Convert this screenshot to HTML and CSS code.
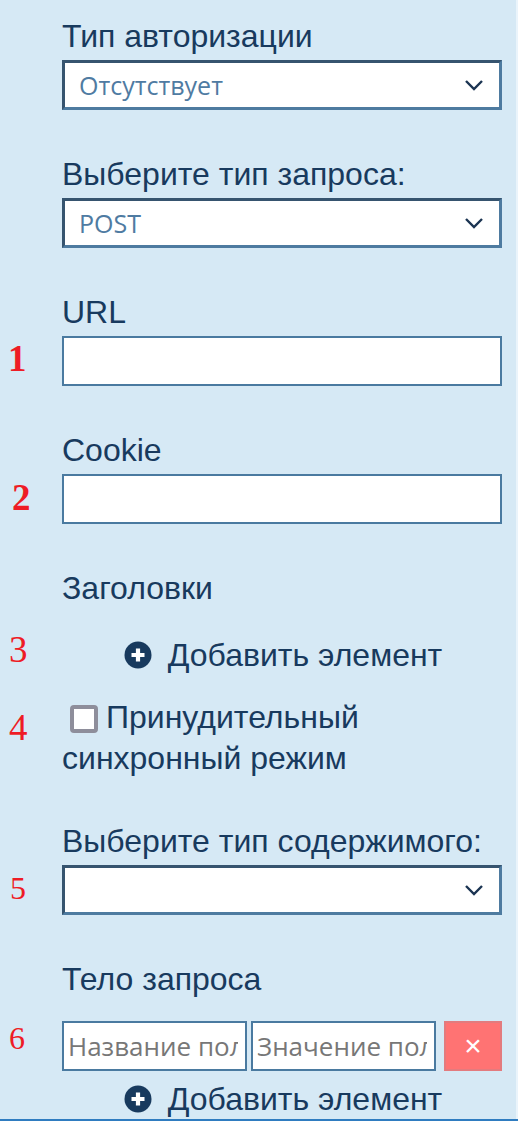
FILE: index.html
```html
<!DOCTYPE html>
<html lang="ru">
<head>
<meta charset="utf-8">
<link rel="stylesheet" href="styles.css">
</head>
<body>
<div class="page">
  <div class="form">
    <div class="label l-first">Тип авторизации</div>
    <div class="field">
      <span class="num"></span>
      <div class="select"><span class="select-text">Отсутствует</span><svg class="chev" viewBox="0 0 20 12"><path d="M2 2 L10 10 L18 2" /></svg></div>
    </div>

    <div class="label l-sec">Выберите тип запроса:</div>
    <div class="field">
      <span class="num"></span>
      <div class="select"><span class="select-text">POST</span><svg class="chev" viewBox="0 0 20 12"><path d="M2 2 L10 10 L18 2" /></svg></div>
    </div>

    <div class="label l-sec">URL</div>
    <div class="field">
      <span class="num num-bold n1">1</span>
      <input class="text-input" type="text">
    </div>

    <div class="label l-sec">Cookie</div>
    <div class="field">
      <span class="num num-bold n2">2</span>
      <input class="text-input" type="text">
    </div>

    <div class="label l-sec">Заголовки</div>
    <div class="field f-add">
      <span class="num n3">3</span>
      <div class="add"><svg class="plus" viewBox="0 0 28 28"><circle cx="14" cy="14" r="13.5" /><path d="M14 7.5 V20.5 M7.5 14 H20.5" /></svg><span>Добавить элемент</span></div>
    </div>

    <div class="field f-check">
      <span class="num n4">4</span>
      <label class="check"><span class="box"></span>Принудительный синхронный режим</label>
    </div>

    <div class="label l-sec l-after-check">Выберите тип содержимого:</div>
    <div class="field">
      <span class="num n5">5</span>
      <div class="select"><span class="select-text"></span><svg class="chev" viewBox="0 0 20 12"><path d="M2 2 L10 10 L18 2" /></svg></div>
    </div>

    <div class="label l-sec">Тело запроса</div>
    <div class="field f-body">
      <span class="num n6">6</span>
      <div class="pair">
        <input class="pair-input" type="text" placeholder="Название поля">
        <input class="pair-input" type="text" placeholder="Значение поля">
        <button class="remove" type="button">×</button>
      </div>
    </div>
    <div class="field f-add2">
      <span class="num"></span>
      <div class="add"><svg class="plus" viewBox="0 0 28 28"><circle cx="14" cy="14" r="13.5" /><path d="M14 7.5 V20.5 M7.5 14 H20.5" /></svg><span>Добавить элемент</span></div>
    </div>
  </div>
  <div class="edge"></div>
</div>
</body>
</html>
```

FILE: styles.css
```css
* { box-sizing: border-box; }
html, body { margin: 0; padding: 0; }
body {
  background: #d6e9f5;
  font-family: "Liberation Sans", Arial, sans-serif;
  color: #183a5e;
}
.page {
  display: flex;
  height: 1121px;
  border-bottom: 2px solid #2f7cc0;
  overflow: hidden;
}
.form {
  flex: 1;
  display: flex;
  flex-direction: column;
  padding-top: 18px;
}
.edge {
  width: 2px;
  background: #eaf4fb;
}
.label {
  margin-left: 62px;
  font-size: 32px;
  line-height: 36px;
  height: 36px;
  margin-bottom: 6px;
  white-space: nowrap;
}
.l-sec { margin-top: 46px; }
.l-after-check { margin-top: 44px; }
.field {
  display: grid;
  grid-template-columns: 62px 440px;
  align-items: center;
}
.num {
  font-family: "Liberation Serif", "Times New Roman", serif;
  color: #ee1c25;
  font-size: 37px;
  line-height: 1;
  justify-self: start;
}
.num-bold { font-weight: bold; }
.n1 { margin-left: 8px; margin-top: -6px; }
.n2 { margin-left: 12px; margin-top: -4px; }
.n3 { margin-left: 9px; margin-top: -12px; }
.n4 { margin-left: 9px; margin-top: 12px; align-self: start; }
.n5 { margin-left: 10px; font-size: 32px; margin-top: -4px; }
.n6 { margin-left: 9px; font-size: 32px; margin-top: -16px; }

.select {
  height: 50px;
  background: #fff;
  border: 3px solid;
  border-color: #36546f #4e7ba0 #4e7ba0 #36546f;
  display: flex;
  align-items: center;
  justify-content: space-between;
  padding: 0 15px 0 14px;
}
.select-text {
  font-family: "Open Sans", sans-serif;
  font-size: 25px;
  color: #4f7ba2;
}
.chev {
  width: 20px;
  height: 12px;
  fill: none;
  stroke: #1b3452;
  stroke-width: 2.4;
}
.text-input {
  height: 50px;
  width: 440px;
  border: 2px solid #4a7aa0;
  background: #fff;
  margin: 0;
  outline: none;
}
.f-add { margin-top: 25px; }
.add {
  display: flex;
  align-items: center;
  justify-content: center;
  gap: 16px;
  font-size: 32px;
  line-height: 36px;
  padding-left: 2px;
}
.plus { width: 28px; height: 28px; flex: none; }
.plus circle { fill: #183a5e; }
.plus path { stroke: #fff; stroke-width: 4.2; }

.f-check { margin-top: 24px; align-items: start; }
.check {
  font-size: 32px;
  line-height: 41px;
  display: block;
}
.box {
  display: inline-block;
  width: 28px;
  height: 28px;
  border: 4px solid #8e8e9b;
  border-radius: 4px;
  background: #fff;
  margin: 0 8px 0 8px;
  vertical-align: -5px;
}

.f-body { margin-top: 18px; }
.pair {
  display: flex;
  height: 50px;
}
.pair-input {
  width: 185px;
  height: 50px;
  border: 2px solid #4a7aa0;
  background: #fff;
  margin: 0 4px 0 0;
  padding: 0 7px 0 4px;
  font-family: "Open Sans", sans-serif;
  font-size: 26px;
  outline: none;
}
.pair-input + .pair-input { margin-right: 8px; }
.pair-input::placeholder { color: #777; }
.remove {
  width: 58px;
  height: 50px;
  background: #ff7373;
  border: 2px solid #e37b7e;
  color: #fff;
  font-family: "Liberation Sans", sans-serif;
  font-size: 30px;
  line-height: 1;
  padding: 0;
}
.f-add2 { margin-top: 10px; }
```
